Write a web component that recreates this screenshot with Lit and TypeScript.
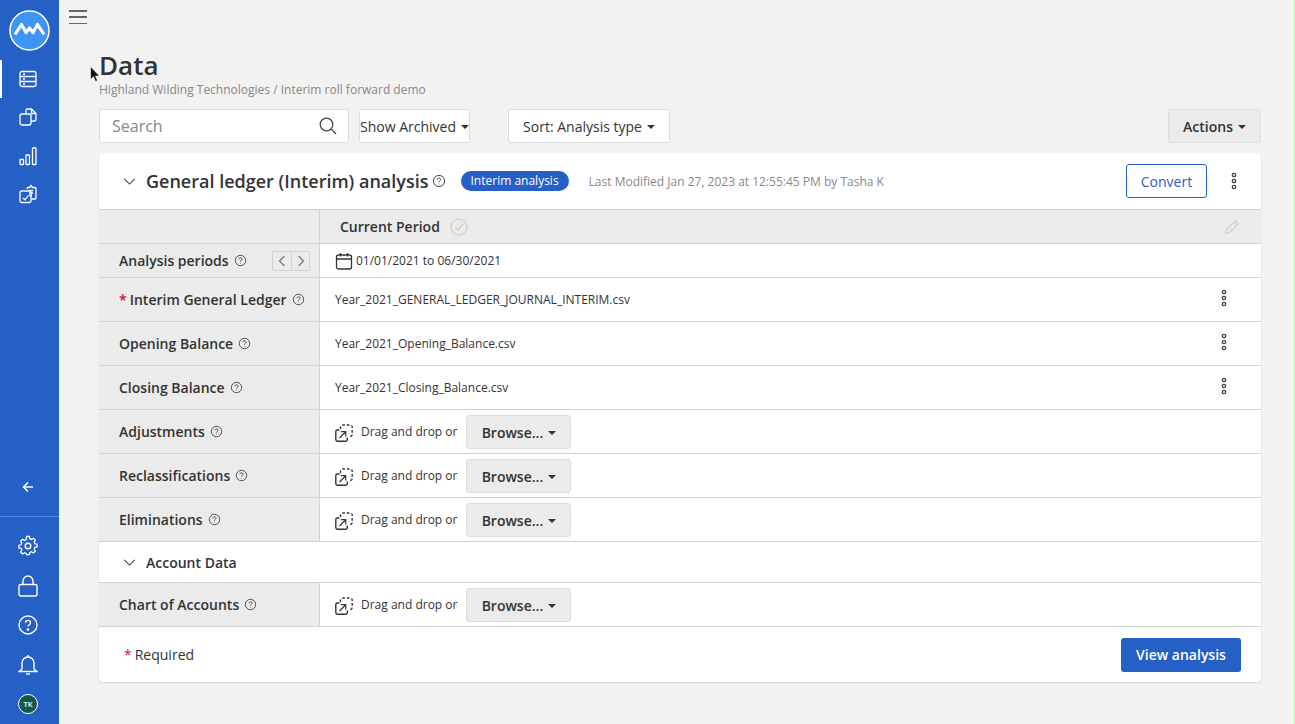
import { LitElement, html, css, svg } from "lit";
import { customElement } from "lit/decorators.js";

const help = () => html`<svg class="help" viewBox="0 0 14 14" fill="none" stroke="currentColor"><circle cx="7" cy="7" r="5.6" stroke-width="1"/><path d="M5.3 5.7c0-1 .8-1.6 1.7-1.6s1.7.6 1.7 1.5c0 1.3-1.7 1.3-1.7 2.6" stroke-width="1"/><circle cx="7" cy="10" r=".5" fill="currentColor" stroke="none"/></svg>`;
const caret = html`<span class="caret"></span>`;
const chevDown = html`<svg class="chev" viewBox="0 0 14 8" fill="none" stroke="currentColor" stroke-width="1.2"><path d="M1 1l6 6 6-6"/></svg>`;
const kebab = html`<svg class="kebab" viewBox="0 0 6 18" fill="none" stroke="currentColor" stroke-width="1.3"><circle cx="3" cy="3" r="1.7"/><circle cx="3" cy="9" r="1.7"/><circle cx="3" cy="15" r="1.7"/></svg>`;
const dropIcon = html`<svg class="drop" viewBox="0 0 18 18" fill="none" stroke="currentColor" stroke-width="1.4"><path d="M4.500 6H2.300A1.600 1.600 0 0 0 .8 7.500v8.200a1.600 1.600 0 0 0 1.500 1.500h8.500a1.600 1.600 0 0 0 1.500-1.500V13.500"/><path d="M5.500 5V3a2 2 0 0 1 2-2h7.700a2 2 0 0 1 2 2v7.500a2 2 0 0 1-2 2H13.500" stroke-dasharray="2.600 2"/><path d="M4.500 14l6-6M5.800 7.700h4.900v4.900" stroke-width="1.200"/></svg>`;

const navTop = [
  svg`<rect x="2" y="2.500" width="16" height="15" rx="2"/><path d="M2 7.500h16M2 12.500h16M5 5h2M5 10h2M5 15h2"/>`,
  svg`<path d="M8 7V3.500a1.500 1.500 0 0 1 1.500-1.500h4l4.500 4.500v6a1.500 1.500 0 0 1-1.500 1.500H13"/><path d="M13.500 2v4.500H18"/><rect x="2" y="7" width="11" height="11" rx="2"/>`,
  svg`<rect x="2" y="13.500" width="3.500" height="5" rx=".5"/><rect x="8" y="9" width="3.500" height="9.500" rx=".5"/><rect x="14.500" y="2" width="3.500" height="16.500" rx=".5"/>`,
  svg`<path d="M9 5V4.500a1 1 0 0 1 1-1h1.500L13 1.500l1.500 2H17a1 1 0 0 1 1 1V14a1 1 0 0 1-1 1h-3.500"/><rect x="2" y="7" width="11" height="11.500" rx="1.500"/><path d="M11 6.500h4M11 9h4M11 11.500h3M5 14l2 1.800 3.500-4.500"/>`,
];

interface Row { label: string; req?: boolean; file?: string; }
const rows1: Row[] = [
  { label: "Interim General Ledger", req: true, file: "Year_2021_GENERAL_LEDGER_JOURNAL_INTERIM.csv" },
  { label: "Opening Balance", file: "Year_2021_Opening_Balance.csv" },
  { label: "Closing Balance", file: "Year_2021_Closing_Balance.csv" },
  { label: "Adjustments" },
  { label: "Reclassifications" },
  { label: "Eliminations" },
];

@customElement("app-root")
export class AppRoot extends LitElement {
  static styles = css`
    :host { display: grid; grid-template-columns: 59px 1fr; height: 724px; overflow: hidden; position: relative;
      font-family: "Open Sans", sans-serif; color: #333; background: #f2f2f2; }
    * { box-sizing: border-box; }
    button { font-family: inherit; padding: 0; }
    .side { background: #2560c6; display: flex; flex-direction: column; align-items: stretch; height: 724px; color: #fff; }
    .logo { height: 60px; display: flex; align-items: center; justify-content: center; }
    .logo svg { width: 41px; height: 41px; margin-top: 1px; }
    .nav { height: 38.300px; display: flex; align-items: center; justify-content: center; }
    .nav svg { width: 20px; height: 20px; fill: none; stroke: #fff; stroke-width: 1.300; margin-left: -3px; }
    .nav.active { box-shadow: inset 2px 0 0 #fff; }
    .spacer { flex: 1; }
    .back { height: 58px; display: flex; align-items: center; justify-content: center; }
    .back svg { width: 12px; height: 12px; margin-left: -3px; }
    .rule { height: 1px; background: #4a86d8; margin-bottom: 10px; }
    .low { height: 39.500px; display: flex; align-items: center; justify-content: center; }
    .low svg { width: 20px; height: 22px; fill: none; stroke: #fff; stroke-width: 1.400; margin-left: -3px; }
    .avatar { width: 20px; height: 20px; margin-left: -3px; border-radius: 50%; background: #10594c; border: 1px solid #fff; font-size: 7.500px; font-weight: 600; display: flex; align-items: center; justify-content: center; color: #fff; }

    .main { border-right: 1px solid #b8f3b8; padding-right: 33px; padding-left: 40px; position: relative; display: flex; flex-direction: column; }
    .burger { width: 18px; height: 14px; margin: 10px 0 0 -30px; display: flex; flex-direction: column; justify-content: space-between; }
    .burger i { height: 1.500px; background: #666; display: block; }
    h1 { margin: 24px 0 0; font-size: 26px; line-height: 34px; font-weight: 600; color: #333; }
    .crumb { font-size: 12px; line-height: 16px; color: #888; }
    .toolbar { display: flex; margin-top: 11px; height: 34px; gap: 10px; }
    .search { width: 250px; background: #fff; border: 1px solid #ddd; border-radius: 3px; display: flex; align-items: center; justify-content: space-between; padding: 0 11px 0 12px; font-size: 16px; color: #888; }
    .search svg { width: 18px; height: 18px; color: #444; }
    .btn { display: inline-flex; align-items: center; justify-content: center; background: #fff; border: 1px solid #ddd; border-radius: 3px; font-size: 14px; color: #333; height: 34px; gap: 5px; white-space: nowrap; }
    .caret { width: 0; height: 0; border-left: 4px solid transparent; border-right: 4px solid transparent; border-top: 4px solid #333; margin-top: 1px; display: inline-block; }
    .archived { width: 111px; }
    .sort { width: 162px; margin-left: 28px; }
    .actions { width: 93px; background: #ebebeb; margin-left: auto; font-weight: 600; }
    .card { margin-top: 10px; height: 529px; background: #fff; border-radius: 4px; box-shadow: 0 1px 2px rgba(0,0,0,.12); display: flex; flex-direction: column; }
    .chead { height: 56px; display: flex; align-items: center; padding: 0 20px 0 24px; flex: none; }
    .chev { width: 13px; height: 7px; color: #444; flex: none; }
    .ctitle { font-size: 18px; font-weight: 600; margin-left: 10px; color: #333; white-space: nowrap; }
    .help { width: 14px; height: 14px; color: #444; flex: none; }
    .chead .help { margin-left: 3px; }
    .pill { background: #2560c6; color: #fff; font-size: 12px; height: 20px; line-height: 20px; padding: 0 10px; border-radius: 10px; margin-left: 15px; white-space: nowrap; }
    .mod { font-size: 12px; color: #888; margin-left: 20px; white-space: nowrap; }
    .convert { width: 81px; height: 34px; margin-left: auto; border: 1px solid #2560c6; color: #2560c6; background: #fff; border-radius: 3px; }
    .kebab { width: 6px; height: 18px; color: #444; flex: none; }
    .chead .kebab { margin-left: 24px; margin-right: 4px; }
    .row { display: grid; grid-template-columns: 221px 1fr; border-top: 1px solid #d2d2d2; flex: none; }
    .lab { background: #ebebeb; border-right: 1px solid #d2d2d2; display: flex; align-items: center; padding-left: 20px; font-size: 14px; font-weight: 600; color: #333; white-space: nowrap; }
    .lab .help { margin-left: 5px; width: 13px; height: 13px; }
    .star { color: #d2122e; margin-right: 3px; font-weight: 600; }
    .val { display: flex; align-items: center; padding-left: 15px; font-size: 12px; color: #333; white-space: nowrap; }
    .val .kebab { margin-left: auto; margin-right: 34px; margin-top: -4px; }
    .r-head { height: 34px; }
    .r-head .val { background: #ebebeb; padding-left: 20px; font-size: 14px; font-weight: 600; padding-right: 20px; }
    .r-head .check { width: 18px; height: 18px; color: #c9c9c9; margin-left: 10px; }
    .r-head .pen { width: 18px; height: 18px; color: #d4d4d4; margin-left: auto; }
    .r-per { height: 34px; }
    .pager { margin-left: auto; margin-right: 9px; width: 38px; height: 20px; border: 1px solid #d2d2d2; border-radius: 2px; display: grid; grid-template-columns: 1fr 1fr; }
    .pager span { display: flex; align-items: center; justify-content: center; color: #777; }
    .pager span + span { border-left: 1px solid #d2d2d2; }
    .pager svg { width: 8px; height: 12px; }
    .cal { width: 18px; height: 18px; margin-right: 3px; color: #333; flex: none; }
    .r-file { height: 44px; }
    .drop { width: 18px; height: 18px; color: #333; margin-right: 8px; flex: none; margin-top: 2px; }
    .dd { margin-top: -1px; }
    .browse { width: 105px; height: 34px; margin-left: 9px; background: #ebebeb; font-weight: 600; margin-top: 1px; }
    .acct { height: 41px; display: flex; align-items: center; padding-left: 24px; border-top: 1px solid #d2d2d2; flex: none; }
    .acct span { font-size: 14px; font-weight: 600; margin-left: 10px; color: #333; }
    .foot { border-top: 1px solid #d2d2d2; flex: 1; display: flex; align-items: center; justify-content: space-between; padding: 0 20px 0 25px; font-size: 14px; }
    .foot .star { font-weight: 400; }
    .view { width: 120px; height: 34px; background: #2560c6; color: #fff; border: none; font-weight: 600; }
    .cursor { position: absolute; left: 90px; top: 66px; width: 11px; height: 17px; }
  `;

  private label(r: Row) {
    return html`<div class="lab">${r.req ? html`<span class="star">*</span>` : ""}${r.label}${help()}</div>`;
  }

  private value(r: Row) {
    if (r.file) return html`<div class="val">${r.file}${kebab}</div>`;
    return html`<div class="val">${dropIcon}<span class="dd">Drag and drop or</span><button class="btn browse">Browse...${caret}</button></div>`;
  }

  render() {
    return html`
      <aside class="side">
        <div class="logo">
          <svg viewBox="0 0 41 41"><circle cx="20.500" cy="20.500" r="19.500" fill="#3d96f5" stroke="#fff" stroke-width="1.500"/><path d="M6 24.500L12.500 14.500l4.500 8 3.500-4.500 3.500 4.500 4.500-8L35 24.500" fill="none" stroke="#fff" stroke-width="3.200" stroke-linejoin="round"/></svg>
        </div>
        ${navTop.map((p, i) => html`<div class="nav ${i === 0 ? "active" : ""}"><svg viewBox="0 0 20 20">${p}</svg></div>`)}
        <div class="spacer"></div>
        <div class="back"><svg viewBox="0 0 12 12" fill="none" stroke="#fff" stroke-width="1.600"><path d="M11 6H2M6 1.500L1.500 6 6 10.500"/></svg></div>
        <div class="rule"></div>
        <div class="low"><svg viewBox="0 0 20 20"><circle cx="10" cy="10" r="2.800"/><path d="M8.500 1h3l.5 2.500 1.800.8 2.200-1.300 2.100 2.100-1.300 2.200.8 1.800 2.400.5v3l-2.400.5-.8 1.800 1.300 2.200-2.100 2.100-2.200-1.300-1.800.8-.5 2.300h-3L8 19.800l-1.800-.8L4 20.300l-2.100-2.100 1.300-2.200-.8-1.800L0 13.700v-3l2.400-.5.8-1.800L1.900 6.200 4 4.100l2.200 1.300L8 4.600z" transform="translate(.9 -.5) scale(.91)"/></svg></div>
        <div class="low"><svg viewBox="0 0 20 22"><rect x="1" y="9.500" width="18" height="11.500" rx="2"/><path d="M5 9.500V6a5 5 0 0 1 10 0v3.500"/></svg></div>
        <div class="low"><svg viewBox="0 0 20 20"><circle cx="10" cy="10" r="9"/><path d="M7.500 7.800c0-1.500 1.100-2.400 2.500-2.400s2.500.9 2.500 2.300c0 2-2.500 2-2.500 3.900"/><circle cx="10" cy="14.500" r=".6" fill="#fff"/></svg></div>
        <div class="low"><svg viewBox="0 0 20 22"><path d="M10 1v2M4 15V9a6 6 0 0 1 12 0v6l3 2.500H1z"/><path d="M8 20h4"/></svg></div>
        <div class="low"><div class="avatar">TK</div></div>
      </aside>
      <main class="main">
        <div class="burger"><i></i><i></i><i></i></div>
        <h1>Data</h1>
        <div class="crumb">Highland Wilding Technologies / Interim roll forward demo</div>
        <div class="toolbar">
          <div class="search">Search<svg viewBox="0 0 18 18" fill="none" stroke="currentColor" stroke-width="1.300"><circle cx="7.500" cy="7.500" r="6.300"/><path d="M12 12l5 5"/></svg></div>
          <button class="btn archived">Show Archived ${caret}</button>
          <button class="btn sort">Sort: Analysis type ${caret}</button>
          <button class="btn actions">Actions ${caret}</button>
        </div>
        <section class="card">
          <div class="chead">
            ${chevDown}<span class="ctitle">General ledger (Interim) analysis</span>${help()}
            <span class="pill">Interim analysis</span>
            <span class="mod">Last Modified Jan 27, 2023 at 12:55:45 PM by Tasha K</span>
            <button class="btn convert">Convert</button>${kebab}
          </div>
          <div class="row r-head">
            <div class="lab"></div>
            <div class="val">Current Period
              <svg class="check" viewBox="0 0 18 18" fill="none" stroke="currentColor" stroke-width="1.200"><circle cx="9" cy="9" r="8"/><path d="M5.500 9.500l2.500 2.500 5-6"/></svg>
              <svg class="pen" viewBox="0 0 18 18" fill="none" stroke="currentColor" stroke-width="1.500"><path d="M2.500 15.500l1-4L12.500 2.500l3 3-9 9z"/><path d="M11 4l3 3"/></svg>
            </div>
          </div>
          <div class="row r-per">
            <div class="lab">Analysis periods${help()}
              <div class="pager">
                <span><svg viewBox="0 0 8 12" fill="none" stroke="currentColor" stroke-width="1.200"><path d="M6.500 1L1.500 6l5 5"/></svg></span>
                <span><svg viewBox="0 0 8 12" fill="none" stroke="currentColor" stroke-width="1.200"><path d="M1.500 1l5 5-5 5"/></svg></span>
              </div>
            </div>
            <div class="val">
              <svg class="cal" viewBox="0 0 18 18" fill="none" stroke="currentColor" stroke-width="1.300"><rect x="1.500" y="3" width="15" height="14" rx="2"/><path d="M1.500 7h15M5.500 1v3.500M12.500 1v3.500"/></svg>
              01/01/2021 to 06/30/2021
            </div>
          </div>
          ${rows1.map((r) => html`<div class="row r-file">${this.label(r)}${this.value(r)}</div>`)}
          <div class="acct">${chevDown}<span>Account Data</span></div>
          <div class="row r-file">${this.label({ label: "Chart of Accounts" })}${this.value({ label: "" })}</div>
          <div class="foot">
            <div><span class="star">*</span>Required</div>
            <button class="btn view">View analysis</button>
          </div>
        </section>
      </main>
      <svg class="cursor" viewBox="0 0 11 17"><path d="M.5.500v13l3-2.800 2 4.800 2-1-2-4.500h4z" fill="#111" stroke="#fff" stroke-width=".6"/></svg>
    `;
  }
}
